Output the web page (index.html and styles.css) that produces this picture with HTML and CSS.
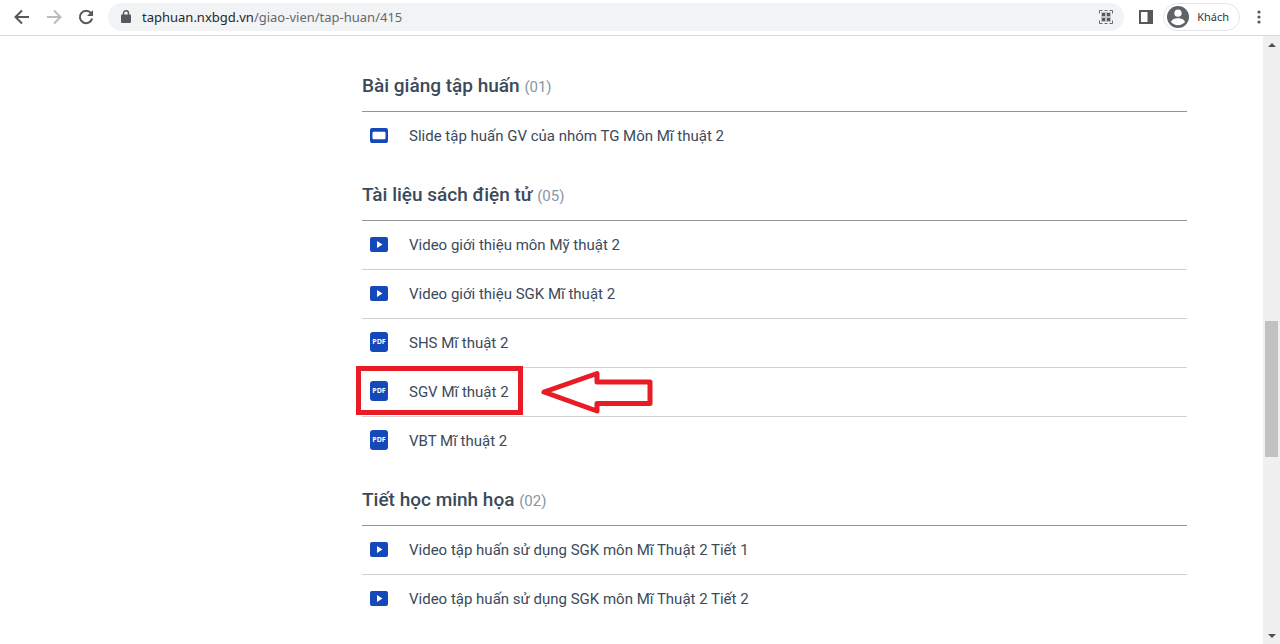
FILE: index.html
```html
<!DOCTYPE html>
<html lang="vi">
<head>
<meta charset="utf-8">
<meta name="viewport" content="width=device-width, initial-scale=1">
<title>Tập huấn</title>
<link rel="stylesheet" href="styles.css">
</head>
<body>
<svg class="sprite" aria-hidden="true">
  <symbol id="i-video" viewBox="0 0 18 15"><rect width="18" height="15" rx="2" fill="#1548b8"/><path d="M7 4v7l5.500-3.500z" fill="#fff"/></symbol>
  <symbol id="i-slide" viewBox="0 0 18 15"><rect width="18" height="15" rx="2" fill="#1548b8"/><rect x="2.500" y="3.800" width="13" height="7.400" rx="1" fill="#fff"/></symbol>
</svg>
<header class="toolbar">
  <button class="tool" type="button" aria-label="Quay lại"><svg width="16" height="16" viewBox="0 0 16 16" fill="none" stroke="#55585c" stroke-width="2"><path d="M15 8H2M8 1.500L1.500 8 8 14.500"/></svg></button>
  <button class="tool" type="button" aria-label="Tiến"><svg width="16" height="16" viewBox="0 0 16 16" fill="none" stroke="#babcbe" stroke-width="2"><path d="M1 8h13M8 1.500L14.500 8 8 14.500"/></svg></button>
  <button class="tool" type="button" aria-label="Tải lại"><svg width="16" height="16" viewBox="0 0 16 16"><path d="M13 4.200A6.200 6.200 0 1 0 14.100 9.500" fill="none" stroke="#55585c" stroke-width="2"/><path d="M15 1v6H9z" fill="#55585c"/></svg></button>
  <div class="address">
    <svg class="lock" width="10" height="13" viewBox="0 0 10 13"><rect y="4.500" width="10" height="8.500" rx="1" fill="#55585c"/><path d="M2.500 5V3.200a2.500 2.500 0 0 1 5 0V5" fill="none" stroke="#55585c" stroke-width="1.400"/></svg>
    <span class="url"><span class="host">taphuan.nxbgd.vn</span>/giao-vien/tap-huan/415</span>
    <button class="plain" type="button" aria-label="Mã QR"><svg width="14" height="14" viewBox="0 0 14 14" fill="none" stroke="#66696d"><path d="M.5 3.500V.5h3M10.500 .5h3v3M13.500 10.500v3h-3M3.500 13.500h-3v-3M5.500 .5h3M5.500 13.500h3"/><path d="M2.500 2.500h4v4h-4zM7.500 2.500h4v4h-4zM2.500 7.500h4v4h-4zM7.500 7.500h4v4h-4z" fill="#55585c" stroke="#c5c7ca" stroke-width=".8"/></svg></button>
  </div>
  <button class="plain panel" type="button" aria-label="Bảng bên"><svg width="14" height="14" viewBox="0 0 14 14"><rect x="1" y="1" width="12" height="12" fill="#fff" stroke="#55585c" stroke-width="2"/><path d="M8.500 0H14v14H8.500z" fill="#55585c"/></svg></button>
  <button class="profile" type="button"><svg width="22" height="22" viewBox="0 0 22 22"><circle cx="11" cy="11" r="11" fill="#5f6368"/><circle cx="11" cy="7.200" r="3.600" fill="#fff"/><path d="M4 16c1-3 4-3.800 7-3.800s6 .8 7 3.800c-1.600 2-4 3.200-7 3.200S5.600 18 4 16z" fill="#fff"/></svg>Khách</button>
  <button class="plain menu" type="button" aria-label="Trình đơn"><svg width="4" height="14" viewBox="0 0 4 14" fill="#55585c"><circle cx="2" cy="2" r="1.600"/><circle cx="2" cy="7" r="1.600"/><circle cx="2" cy="12" r="1.600"/></svg></button>
</header>
<div class="viewport">
  <main class="content">
    <section class="group">
      <h2 class="title">Bài giảng tập huấn <span class="count">(01)</span></h2>
      <ul class="list">
        <li class="item"><svg class="icon"><use href="#i-slide"/></svg><a class="link" href="#">Slide tập huấn GV của nhóm TG Môn Mĩ thuật 2</a></li>
      </ul>
    </section>
    <section class="group">
      <h2 class="title">Tài liệu sách điện tử <span class="count">(05)</span></h2>
      <ul class="list">
        <li class="item"><svg class="icon"><use href="#i-video"/></svg><a class="link" href="#">Video giới thiệu môn Mỹ thuật 2</a></li>
        <li class="item"><svg class="icon"><use href="#i-video"/></svg><a class="link" href="#">Video giới thiệu SGK Mĩ thuật 2</a></li>
        <li class="item"><span class="pdf">PDF</span><a class="link" href="#">SHS Mĩ thuật 2</a></li>
        <li class="item"><span class="pdf">PDF</span><a class="link" href="#">SGV Mĩ thuật 2</a>
          <span class="marker"></span>
          <svg class="arrow" width="114" height="44" viewBox="0 0 114 44" fill="#fff" stroke="#e81c24" stroke-width="5" stroke-linejoin="round"><path d="M4 22L57 3.500v8.500h53v21.500H57V41z"/></svg>
        </li>
        <li class="item"><span class="pdf">PDF</span><a class="link" href="#">VBT Mĩ thuật 2</a></li>
      </ul>
    </section>
    <section class="group">
      <h2 class="title">Tiết học minh họa <span class="count">(02)</span></h2>
      <ul class="list">
        <li class="item"><svg class="icon"><use href="#i-video"/></svg><a class="link" href="#">Video tập huấn sử dụng SGK môn Mĩ Thuật 2 Tiết 1</a></li>
        <li class="item"><svg class="icon"><use href="#i-video"/></svg><a class="link" href="#">Video tập huấn sử dụng SGK môn Mĩ Thuật 2 Tiết 2</a></li>
      </ul>
    </section>
  </main>
  <div class="scrollbar" aria-hidden="true">
    <svg width="8" height="4" viewBox="0 0 8 4"><path d="M0 4l4-4 4 4z" fill="#505050"/></svg>
    <div class="track"><div class="thumb"></div></div>
    <svg width="8" height="4" viewBox="0 0 8 4"><path d="M0 0l4 4 4-4z" fill="#505050"/></svg>
  </div>
</div>
</body>
</html>
```
FILE: styles.css
```css
* { box-sizing: border-box; }
body {
  margin: 0;
  min-height: 100vh;
  display: flex;
  flex-direction: column;
  background: #fff;
  font-family: Roboto, "Liberation Sans", sans-serif;
  color: #3b4a5a;
}
button { padding: 0; border: 0; background: none; font: inherit; color: inherit; }
svg { display: block; }
.sprite { position: absolute; width: 0; height: 0; }

.toolbar {
  display: flex;
  align-items: center;
  height: 36px;
  padding: 0 19px 2px 14px;
  border-bottom: 1px solid #d9dadc;
  font-family: "Noto Sans", sans-serif;
}
.tool { display: grid; place-items: center; width: 16px; margin-right: 16px; }
.address {
  flex: 1;
  display: flex;
  align-items: center;
  height: 28px;
  margin-right: 15px;
  margin-left: -2px;
  padding: 0 11px 0 13px;
  border-radius: 14px;
  background: #f1f3f4;
}
.url { flex: 1; margin-left: 11px; font-size: 13px; line-height: 20px; color: #65696e; }
.host { color: #25282c; }
.profile {
  display: flex;
  align-items: center;
  gap: 8px;
  height: 28px;
  margin: 0 17px 0 10px;
  padding: 0 10px 0 3px;
  border: 1px solid #e3e5e7;
  border-radius: 14px;
  font-size: 11px;
  color: #33363a;
}

.viewport { flex: 1; display: flex; }
.content { flex: 1; padding: 15px 76px 0 362px; }
.title {
  height: 61px;
  margin: 0;
  padding-top: 22px;
  border-bottom: 1px solid #929497;
  font-size: 19px;
  line-height: 26px;
  font-weight: 500;
}
.count { font-size: 15px; font-weight: 400; color: #8796a4; }
.list { margin: 0; padding: 0; list-style: none; }
.item {
  position: relative;
  display: flex;
  align-items: center;
  height: 49px;
  padding-left: 8px;
  border-bottom: 1px solid #cfd0d2;
}
.item:last-child { height: 48px; border-bottom: 0; }
.icon { width: 18px; height: 15px; margin: 0 21px 2px 0; }
.pdf {
  width: 18px;
  height: 20px;
  margin: 0 21px 2px 0;
  border-radius: 3px;
  background: #1548b8;
  color: #fff;
  font: 700 7px/20px "Open Sans", sans-serif;
  text-align: center;
}
.link { font-size: 15px; line-height: 24px; color: inherit; text-decoration: none; }
.marker { position: absolute; top: -2px; left: -6px; width: 167px; height: 49px; border: 5px solid #e81c24; }
.arrow { position: absolute; top: 2px; left: 178px; }

.scrollbar {
  display: flex;
  flex-direction: column;
  align-items: center;
  width: 17px;
  padding: 7px 0 6px;
  background: #f0f0f0;
}
.track { flex: 1; display: grid; grid-template-rows: 274fr 136fr 177fr; }
.thumb { grid-row: 2; width: 13px; background: #c1c1c1; }
```
